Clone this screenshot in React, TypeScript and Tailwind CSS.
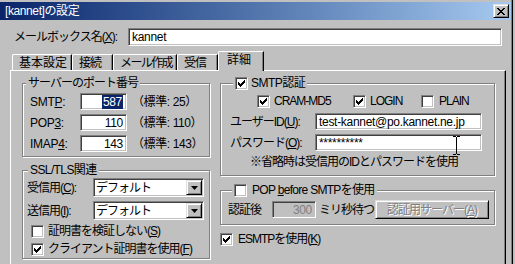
import React from "react";

const sunken =
  "border border-t-[#808080] border-l-[#808080] border-b-white border-r-white shadow-[inset_1px_1px_0_#404040,inset_-1px_-1px_0_#c0c0c0]";
const raised =
  "border border-t-[#dfdfdf] border-l-[#dfdfdf] border-b-black border-r-black shadow-[inset_1px_1px_0_#ffffff,inset_-1px_-1px_0_#808080]";
const etched =
  "border border-[#808080] shadow-[inset_1px_1px_0_#ffffff,1px_1px_0_#ffffff]";
const legend = "self-start -mt-[8px] px-[2px] bg-[#c0c0c0] h-[14px] flex items-center";
const latin = "tracking-[-0.3px]";

function U({ children }: { children: React.ReactNode }) {
  return <span className="underline underline-offset-[1px]">{children}</span>;
}

function Check({ checked }: { checked?: boolean }) {
  const cols = [2, 3, 4, 3, 2, 1, 0];
  return (
    <div className={`w-[13px] h-[13px] bg-white shrink-0 flex items-center justify-center ${sunken}`}>
      {checked && (
        <svg width="7" height="7" viewBox="0 0 7 7" shapeRendering="crispEdges">
          {cols.map((y, x) => (
            <rect key={x} x={x} y={y} width="1" height="3" fill="#000" />
          ))}
        </svg>
      )}
    </div>
  );
}

function Combo({ text }: { text: string }) {
  return (
    <div className={`w-[111px] h-[19px] shrink-0 bg-white flex items-center ${sunken}`}>
      <span className="flex-1 pl-[2px]">{text}</span>
      <div className={`w-[16px] h-[15px] mr-[1px] shrink-0 bg-[#c0c0c0] flex items-center justify-center ${raised}`}>
        <svg width="7" height="4" viewBox="0 0 7 4">
          <polygon points="0,0 7,0 3.5,4" fill="#000" />
        </svg>
      </div>
    </div>
  );
}

function PortRow({ label, children, std }: { label: React.ReactNode; children: React.ReactNode; std: string }) {
  return (
    <div className="flex items-center h-[17px]">
      <span className={`w-[50px] shrink-0 ${latin}`}>{label}</span>
      <div className={`w-[47px] h-[17px] shrink-0 bg-white flex items-center justify-end pr-[3px] ${latin} ${sunken}`}>
        {children}
      </div>
      <span className="ml-[5px] tracking-[-0.4px]">{std}</span>
    </div>
  );
}

export default function App() {
  return (
    <div className="w-[515px] h-[264px] overflow-hidden bg-[#c0c0c0] text-[12px] leading-[14px] tracking-[-1px] whitespace-nowrap text-black font-['Liberation_Sans','Noto_Sans_CJK_JP',sans-serif]">
      <div className="w-[513px] h-[290px] pt-[2px] border-r border-r-black shadow-[inset_-1px_0_0_#808080] flex flex-col">
        {/* Title bar */}
        <div className="h-[18px] w-[511px] shrink-0 flex items-center bg-linear-to-r from-[#0a246a] to-[#a6caf0] pl-[5px] pr-[2px]">
          <span className="flex-1 text-white tracking-[-0.4px]">[kannet]の設定</span>
          <div className={`w-[16px] h-[14px] bg-[#c0c0c0] flex items-center justify-center ${raised}`}>
            <svg width="8" height="7" viewBox="0 0 8 7" shapeRendering="crispEdges">
              <path d="M0 0h2v1h1v1h2v-1h1v-1h2v1h-1v1h-1v1h-1v1h1v1h1v1h1v1h-2v-1h-1v-1h-2v1h-1v1h-2v-1h1v-1h1v-1h1v-1h-1v-1h-1z" fill="#000" />
            </svg>
          </div>
        </div>

        {/* Mailbox row */}
        <div className="flex items-center mt-[8px] h-[18px] shrink-0">
          <span className="w-[128px] shrink-0 pl-[14px]">
            メールボックス名(<U>X</U>):
          </span>
          <div className={`w-[374px] h-[18px] shrink-0 bg-white flex items-center pl-[3px] ${latin} ${sunken}`}>kannet</div>
        </div>

        {/* Tabs */}
        <div className="flex items-end h-[19px] mt-[5px] pl-[12px] shrink-0">
          {[
            ["基本設定", "w-[60px] tracking-[0px]"],
            ["接続", "w-[41px]"],
            ["メール作成", "w-[64px] tracking-[-1.6px]"],
            ["受信", "w-[41px]"],
          ].map(([t, w]) => (
            <div
              key={t}
              className={`${w} shrink-0 h-[16px] pl-[6px] flex items-center border-t border-l border-t-white border-l-white border-r border-r-black shadow-[inset_-1px_0_0_#808080] rounded-tl-[2px]`}
            >
              {t}
            </div>
          ))}
          <div className="relative z-10 w-[46px] shrink-0 h-[20px] -mb-[1px] pl-[8px] pt-[1px] bg-[#c0c0c0] tracking-[0px] border-t border-l border-t-white border-l-white border-r border-r-black shadow-[inset_-1px_0_0_#808080] rounded-tl-[2px]">
            詳細
          </div>
        </div>

        {/* Panel */}
        <div className="ml-[10px] w-[496px] flex-1 border-l border-t border-l-white border-t-white border-r border-r-black shadow-[inset_-1px_0_0_#808080] flex gap-[10px] pl-[11px] pt-[12px]">
          {/* Left column */}
          <div className="w-[188px] shrink-0 flex flex-col">
            <div className={`${etched} flex flex-col pl-[7px] pb-[4px]`}>
              <span className={`${legend} -ml-[4px]`}>サーバーのポート番号</span>
              <div className="flex flex-col gap-[4px] mt-[3px]">
                <PortRow
                  label={
                    <>
                      SMT<U>P</U>:
                    </>
                  }
                  std="（標準: 25）"
                >
                  <span className="bg-[#0a246a] text-white px-[1px]">587</span>
                </PortRow>
                <PortRow
                  label={
                    <>
                      POP<U>3</U>:
                    </>
                  }
                  std="（標準: 110）"
                >
                  110
                </PortRow>
                <PortRow
                  label={
                    <>
                      IMAP<U>4</U>:
                    </>
                  }
                  std="（標準: 143）"
                >
                  143
                </PortRow>
              </div>
            </div>

            <div className={`${etched} mt-[13px] flex flex-col pl-[4px]`}>
              <span className={`${legend} ml-[1px] tracking-[-0.6px]`}>SSL/TLS関連</span>
              <div className="flex flex-col gap-[4px] mt-[1px]">
                <div className="flex items-center h-[19px]">
                  <span className="w-[66px] shrink-0">
                    受信用(<U>C</U>):
                  </span>
                  <Combo text="デフォルト" />
                </div>
                <div className="flex items-center h-[19px]">
                  <span className="w-[66px] shrink-0">
                    送信用(<U>I</U>):
                  </span>
                  <Combo text="デフォルト" />
                </div>
              </div>
              <div className="flex flex-col mt-[2px] pl-[4px]">
                <div className="flex items-center h-[18px] gap-[4px]">
                  <Check />
                  <span>
                    証明書を検証しない(<U>S</U>)
                  </span>
                </div>
                <div className="flex items-center h-[18px] gap-[4px]">
                  <Check checked />
                  <span>
                    クライアント証明書を使用(<U>F</U>)
                  </span>
                </div>
              </div>
            </div>
          </div>

          {/* Right column */}
          <div className="w-[275px] shrink-0 flex flex-col">
            <div className={`${etched} flex flex-col pl-[9px] pb-[6px]`}>
              <span className={`${legend} ml-[3px] gap-[3px]`}>
                <Check checked />
                <span className="tracking-[-0.5px]">SMTP認証</span>
              </span>
              <div className="flex items-center h-[14px] mt-[4px] pl-[27px]">
                <div className="w-[96px] shrink-0 flex items-center gap-[4px]">
                  <Check checked />
                  <span>CRAM-MD5</span>
                </div>
                <div className="w-[68px] shrink-0 flex items-center gap-[4px]">
                  <Check checked />
                  <span>LOGIN</span>
                </div>
                <div className="flex items-center gap-[5px]">
                  <Check />
                  <span>PLAIN</span>
                </div>
              </div>
              <div className="flex items-center h-[17px] mt-[5px]">
                <span className="w-[85px] shrink-0">
                  ユーザーID(<U>U</U>):
                </span>
                <div className={`w-[167px] h-[17px] shrink-0 bg-white flex items-center pl-[3px] ${latin} ${sunken}`}>
                  test-kannet@po.kannet.ne.jp
                </div>
              </div>
              <div className="flex items-center h-[17px] mt-[4px]">
                <span className="w-[85px] shrink-0">
                  パスワード(<U>O</U>):
                </span>
                <div className={`relative w-[167px] h-[17px] shrink-0 bg-white flex items-center pl-[3px] ${latin} ${sunken}`}>
                  **********
                  <svg className="absolute left-[137px] top-[1px]" width="7" height="19" viewBox="0 0 7 19">
                    <path d="M0 0.5h3M4 0.5h3M3.5 1v17M0 18.5h3M4 18.5h3" stroke="#000" strokeWidth="1" fill="none" />
                  </svg>
                </div>
              </div>
              <div className="mt-[4px] pl-[20px] h-[14px]">※省略時は受信用のIDとパスワードを使用</div>
            </div>

            <div className={`${etched} mt-[14px] flex flex-col pl-[7px] pb-[5px]`}>
              <span className={`${legend} ml-[4px] gap-[5px]`}>
                <Check />
                <span className="tracking-[-0.7px]">
                  POP <U>b</U>efore SMTPを使用
                </span>
              </span>
              <div className="flex items-center h-[19px] mt-[3px]">
                <span className="w-[44px] shrink-0">認証後</span>
                <div className={`w-[44px] h-[17px] shrink-0 bg-[#c0c0c0] text-[#808080] flex items-center justify-end pr-[3px] ${latin} ${sunken}`}>
                  300
                </div>
                <span className="w-[59px] shrink-0 pl-[3px]">ミリ秒待つ</span>
                <div
                  className={`w-[114px] h-[19px] shrink-0 bg-[#c0c0c0] flex items-center justify-center text-[#808080] [text-shadow:1px_1px_0_#ffffff] ${raised}`}
                >
                  認証用サーバー(<U>A</U>)
                </div>
              </div>
            </div>

            <div className="flex items-center h-[14px] mt-[7px] gap-[5px]">
              <Check checked />
              <span>
                ESMTPを使用(<U>K</U>)
              </span>
            </div>
          </div>
        </div>
      </div>
    </div>
  );
}
